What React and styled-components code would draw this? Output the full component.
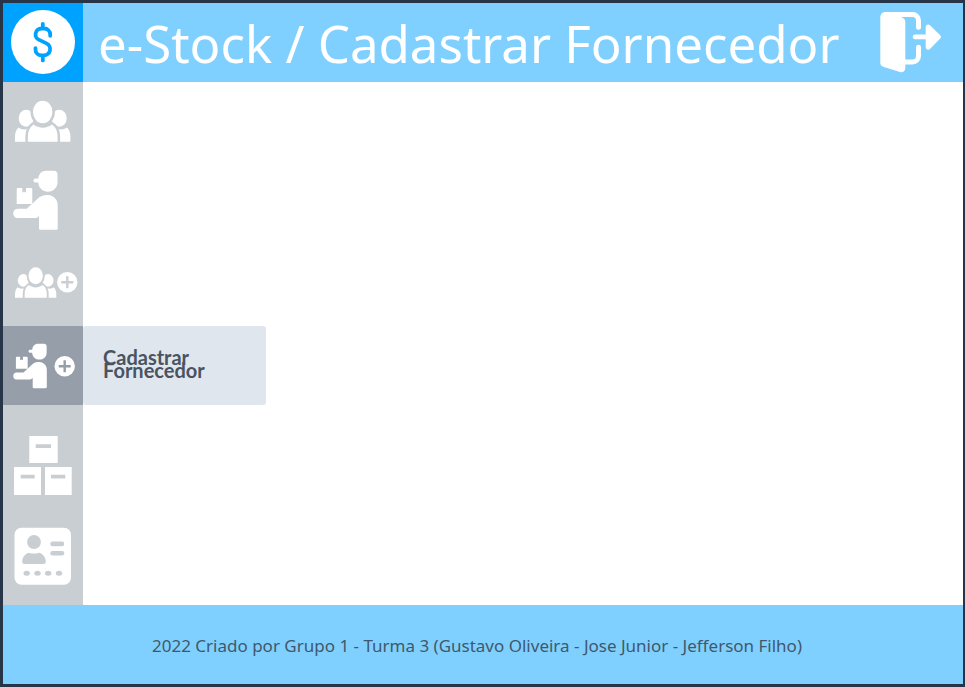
import React from "react";
import styled, { createGlobalStyle } from "styled-components";

const colors = {
  frame: "#263548",
  sky: "#7fd0ff",
  brand: "#00a2ff",
  rail: "#c9ced2",
  active: "#969eaa",
  label: "#dfe6ee",
  ink: "#4a5361",
  footerInk: "#41586b",
};

const GlobalStyle = createGlobalStyle`
  * { box-sizing: border-box; }
  body { margin: 0; background: #fff; }
`;

const Page = styled.div`
  display: grid;
  grid-template-columns: 80px 1fr;
  grid-template-rows: 79px 1fr 79px;
  min-height: 100vh;
  border: 3px solid ${colors.frame};
  border-right-width: 2px;
  font-family: "Noto Sans", sans-serif;
`;

const Logo = styled.a`
  display: flex;
  align-items: center;
  justify-content: center;
  padding-bottom: 2px;
  background: ${colors.brand};
`;

const Header = styled.header`
  display: flex;
  align-items: center;
  justify-content: space-between;
  padding: 0 21px 2px 15px;
  background: ${colors.sky};
`;

const Title = styled.h1`
  margin: 0;
  padding-top: 3px;
  color: #fff;
  font-size: 51px;
  font-weight: 400;
  line-height: 64px;
  white-space: nowrap;
`;

const ExitButton = styled.button`
  display: flex;
  padding: 0;
  border: 0;
  background: none;
  cursor: pointer;
`;

const Sidebar = styled.nav`
  display: grid;
  grid-template-rows: 78fr 82fr 84fr 79fr 119fr 64fr;
  padding-bottom: 17px;
  background: ${colors.rail};
`;

const NavLink = styled.a`
  position: relative;
  display: flex;
  align-items: center;
  justify-content: center;
  background: ${(p) => (p.$active ? colors.active : "transparent")};
  color: ${(p) => (p.$active ? colors.active : colors.rail)};
  text-decoration: none;
`;

const NavLabel = styled.span`
  position: absolute;
  left: 100%;
  top: 0;
  bottom: 0;
  display: flex;
  align-items: center;
  width: 183px;
  padding: 0 40px 4px 20px;
  border-radius: 3px;
  background: ${colors.label};
  color: ${colors.ink};
  font-family: Lato, sans-serif;
  font-size: 20px;
  font-weight: 700;
  line-height: 13px;
`;

const Icon = styled.svg`
  display: block;
  flex: none;
`;

const Content = styled.main`
  background: #fff;
`;

const Footer = styled.footer`
  grid-column: 1 / -1;
  display: flex;
  align-items: center;
  justify-content: center;
  padding: 2px 12px 0 0;
  background: ${colors.sky};
  color: ${colors.footerInk};
  font-size: 17px;
  line-height: 24px;
`;

function NavIcon({ children }) {
  return (
    <Icon width="80" height="64" viewBox="0 0 80 64" fill="#fff" aria-hidden="true">
      {children}
    </Icon>
  );
}

function People() {
  return (
    <>
      <ellipse cx="23.200" cy="29.200" rx="7.500" ry="8.500" />
      <ellipse cx="56.200" cy="29.200" rx="7.500" ry="8.500" />
      <path d="M12 52.700v-5c0-4 1.200-7 3.500-9.200 2.500 2 6 2.500 9.500 1.300v12.900z" />
      <path d="M67.400 52.700v-5c0-4-1.200-7-3.500-9.200-2.500 2-6 2.500-9.500 1.300v12.900z" />
      <g stroke="currentColor" strokeWidth="5" strokeLinejoin="round">
        <path d="M24.900 52.700v-5.200c0-5.500 1.800-9.500 5.600-12 5.500 4.200 13 4.200 18.500 0 3.800 2.500 5.600 6.500 5.600 12v5.200z" />
        <ellipse cx="39.700" cy="23" rx="9.700" ry="11.300" />
      </g>
      <path d="M24.900 52.700v-5.200c0-5.500 1.800-9.500 5.600-12 5.500 4.200 13 4.200 18.500 0 3.800 2.500 5.600 6.500 5.600 12v5.200z" />
      <ellipse cx="39.700" cy="23" rx="9.700" ry="11.300" />
    </>
  );
}

function Courier() {
  return (
    <>
      <path d="M35.300 9.600C36 4.600 38.500 1.700 43 1.700h8c2.200 0 3.500 1.300 3.500 3.500v8.300c0 5.300-4.200 9.200-9.600 9.200-5.300 0-9.400-4-9.600-9.200h-3c-2.400 0-2.400-3.900 0-3.900z" />
      <path d="M14.700 19h4.600v4.700l1.800-1.100 1.900 1.100V19h5.300a1 1 0 0 1 1 1v15H13.700V20a1 1 0 0 1 1-1z" />
      <path d="M14.500 39.800h9.200L36 28.500c2.500-2 5.800-2.800 9.200-2.500 5.500.4 9.500 4.800 9.500 10v23.200c0 1-.5 1.500-1.500 1.500H37.500c-1 0-1.500-.5-1.500-1.500V47l-1.700 1.500c-.6.500-1 .6-1.700.6H14.500c-5.700 0-5.700-9.300 0-9.300z" />
    </>
  );
}

function Plus({ cx, cy }) {
  return (
    <>
      <circle cx={cx} cy={cy} r="10.200" />
      <path
        d={`M${cx - 6} ${cy}h12M${cx} ${cy - 6}v12`}
        stroke="currentColor"
        strokeWidth="2.400"
      />
    </>
  );
}

function Boxes() {
  return (
    <>
      <path d="M26.300 3h28.400v27H26.300zM11 34h27v28H11zM42 34h26.700v28H42z" />
      <path
        fill="currentColor"
        d="M32.700 11.200H48V15H32.700zM17.700 41.800h14v3.600h-14zM48 41.800h14.300v3.600H48z"
      />
    </>
  );
}

function Badge() {
  return (
    <>
      <rect x="11.500" y="3.800" width="56.500" height="57" rx="7" />
      <g fill="currentColor">
        <circle cx="31" cy="18" r="6.900" />
        <path d="M19.200 37.500c0-4 2.800-7.600 6.500-8.800 3.300 1.200 7.300 1.200 10.600 0 3.700 1.200 6.500 4.800 6.500 8.800 0 1.700-.8 2.500-2.500 2.500H21.700c-1.700 0-2.500-.8-2.500-2.500z" />
        <rect x="47.300" y="17.600" width="14" height="4.600" rx="2.300" />
        <rect x="47.300" y="27" width="14" height="4.600" rx="2.300" />
        <ellipse cx="23.700" cy="49.200" rx="3.200" ry="2.500" />
        <ellipse cx="34.500" cy="49.200" rx="3.200" ry="2.500" />
        <ellipse cx="45.200" cy="49.200" rx="3.200" ry="2.500" />
        <ellipse cx="56" cy="49.200" rx="3.200" ry="2.500" />
      </g>
    </>
  );
}

const items = [
  { name: "Usuários", icon: <People /> },
  { name: "Fornecedores", icon: <Courier /> },
  {
    name: "Cadastrar Usuário",
    icon: (
      <>
        <g transform="translate(3.1 6.600) scale(.745)"><People /></g>
        <Plus cx={64.3} cy={30.3} />
      </>
    ),
  },
  {
    name: "Cadastrar Fornecedor",
    active: true,
    icon: (
      <>
        <g transform="translate(2.600 8.500) scale(.753)"><Courier /></g>
        <Plus cx={61.7} cy={32.2} />
      </>
    ),
  },
  { name: "Produtos", icon: <Boxes /> },
  { name: "Perfil", icon: <Badge /> },
];

export default function App() {
  return (
    <>
      <GlobalStyle />
      <Page>
        <Logo href="#" aria-label="e-Stock">
          <Icon width="64" height="64" viewBox="0 0 64 64" fill="none" aria-hidden="true">
            <circle cx="32" cy="32" r="32" fill="#fff" />
            <path
              d="M39.200 25.800v-1.300a6 6 0 0 0-6-6h-2.700a5.900 5.900 0 0 0-2.200 11.400l7.200 3.500a6.300 6.300 0 0 1-2.700 12h-2.300a6 6 0 0 1-6-6v-1.300M31.800 13.800v4M31.800 46.400v4"
              stroke={colors.brand}
              strokeWidth="3.800"
              strokeLinecap="round"
            />
          </Icon>
        </Logo>
        <Header>
          <Title>e-Stock / Cadastrar Fornecedor</Title>
          <ExitButton type="button" aria-label="Sair">
            <Icon width="64" height="64" viewBox="0 0 64 64" fill="none" aria-hidden="true">
              <path
                d="M8 4.400h26.500a6 6 0 0 1 6 6v6.800M40.500 37.300v8.800a6 6 0 0 1-6 6H25"
                stroke="#fff"
                strokeWidth="5"
                strokeLinecap="round"
              />
              <path
                fill="#fff"
                d="M7.500 2l16 5.200c2.300.8 3.800 2.200 3.800 4.800v46c0 3-2.300 4.800-5.300 4L5.800 57c-2.300-.8-3.500-2-3.500-4.500V7.500C2.300 4.200 4.500 2 7.500 2z"
              />
              <path
                fill="#fff"
                d="M37 24.600h10.700v-7.400c0-2.600 2.700-3.500 4.500-1.700l10 9.700c1 1 1 2.400 0 3.400l-10 10.200c-1.800 1.800-4.500.8-4.500-1.700v-7.900H37c-3 0-3-4.600 0-4.600z"
              />
            </Icon>
          </ExitButton>
        </Header>
        <Sidebar aria-label="Menu principal">
          {items.map(({ name, icon, active }) => (
            <NavLink
              key={name}
              href="#"
              $active={active}
              aria-label={name}
              aria-current={active ? "page" : undefined}
            >
              <NavIcon>{icon}</NavIcon>
              {active && <NavLabel>{name}</NavLabel>}
            </NavLink>
          ))}
        </Sidebar>
        <Content />
        <Footer>
          2022 Criado por Grupo 1 - Turma 3 (Gustavo Oliveira - Jose Junior - Jefferson Filho)
        </Footer>
      </Page>
    </>
  );
}
